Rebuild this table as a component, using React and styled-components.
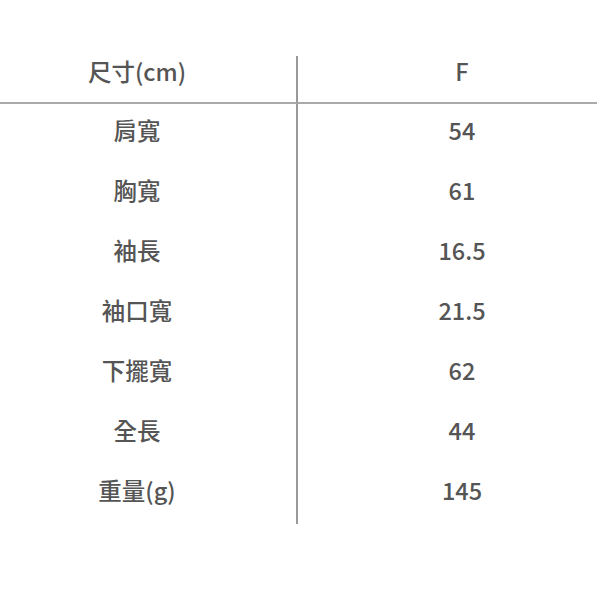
import React from 'react';
import styled, { createGlobalStyle } from 'styled-components';

const Global = createGlobalStyle`
  html, body {
    margin: 0;
    padding: 0;
    background: #fff;
  }
  body {
    font-family: "Noto Sans CJK TC", "Noto Sans", sans-serif;
    color: #555;
  }
`;

const Page = styled.div`
  width: 597px;
  height: 597px;
  padding-top: 56px;
  box-sizing: border-box;
  overflow: hidden;
`;

const Table = styled.div`
  display: grid;
  grid-template-columns: 298px 299px;
`;

const Cell = styled.div`
  height: ${p => (p.head ? '48px' : '60px')};
  display: flex;
  align-items: center;
  justify-content: center;
  box-sizing: border-box;
  font-size: 23.5px;
  font-weight: 500;
  line-height: 1;
  padding-right: ${p => (p.left ? '22px' : '0')};
  padding-left: ${p => (p.left ? '0' : '29px')};
  padding-bottom: ${p => (p.head ? '15px' : '6px')};
  border-right: ${p => (p.left ? '2px solid #999' : 'none')};
  border-bottom: ${p => (p.head ? '2px solid #aaa' : 'none')};
`;

const rows = [
  ['肩寬', '54'],
  ['胸寬', '61'],
  ['袖長', '16.5'],
  ['袖口寬', '21.5'],
  ['下擺寬', '62'],
  ['全長', '44'],
  ['重量(g)', '145'],
];

const App = () => (
  <Page>
    <Global />
    <Table>
      <Cell head left>尺寸(cm)</Cell>
      <Cell head>F</Cell>
      {rows.map(([label, value]) => (
        <React.Fragment key={label}>
          <Cell left>{label}</Cell>
          <Cell>{value}</Cell>
        </React.Fragment>
      ))}
    </Table>
  </Page>
);

export default App;
